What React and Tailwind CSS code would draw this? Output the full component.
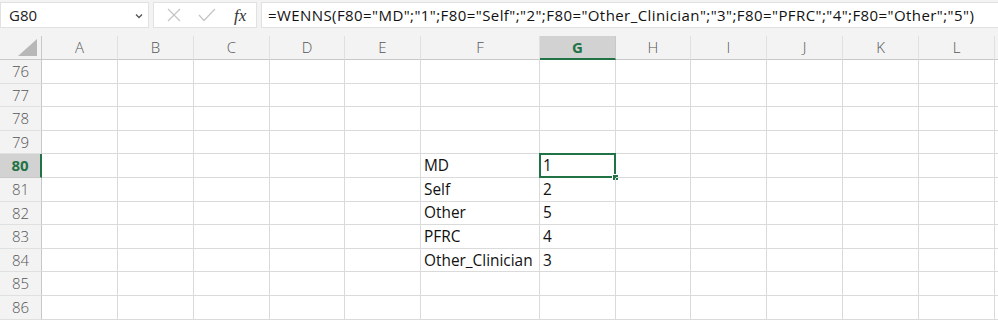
import { Fragment } from 'react';

const COLS = [
  { id: 'A', w: 76 },
  { id: 'B', w: 76 },
  { id: 'C', w: 76 },
  { id: 'D', w: 75 },
  { id: 'E', w: 76 },
  { id: 'F', w: 119 },
  { id: 'G', w: 76 },
  { id: 'H', w: 75 },
  { id: 'I', w: 76 },
  { id: 'J', w: 76 },
  { id: 'K', w: 76 },
  { id: 'L', w: 76 },
];

const DATA = {
  80: { F: 'MD', G: '1' },
  81: { F: 'Self', G: '2' },
  82: { F: 'Other', G: '5' },
  83: { F: 'PFRC', G: '4' },
  84: { F: 'Other_Clinician', G: '3' },
};

const ROWS = [76, 77, 78, 79, 80, 81, 82, 83, 84, 85, 86];

const FORMULA =
  '=WENNS(F80="MD";"1";F80="Self";"2";F80="Other_Clinician";"3";F80="PFRC";"4";F80="Other";"5")';

function FormulaBar() {
  return (
    <div className="flex h-[36px] items-start gap-[4px] bg-[#f3f3f3] pt-[2px]">
      <div className="flex h-[26px] w-[149px] items-center justify-between border border-[#e1e1e1] bg-white pl-[8px] pr-[5px] text-[15px] text-[#222]">
        <span>G80</span>
        <svg width="8" height="6" viewBox="0 0 8 6" className="mt-[2px]">
          <path d="M1 1.5 L4 4.5 L7 1.5" fill="none" stroke="#555" strokeWidth="1.3" />
        </svg>
      </div>
      <div className="flex h-[26px] w-[104px] items-center border border-[#e1e1e1] bg-white pl-[13px]">
        <svg width="14" height="14" viewBox="0 0 14 14">
          <path d="M1 1 L13 13 M13 1 L1 13" stroke="#c4c4c4" strokeWidth="1.2" />
        </svg>
        <svg width="18" height="14" viewBox="0 0 18 14" className="ml-[17px]">
          <path d="M1 7 L6 12.5 L17 1" fill="none" stroke="#c4c4c4" strokeWidth="1.2" />
        </svg>
        <span className="ml-[18px] font-['Liberation_Serif',serif] text-[17px] italic leading-none text-[#333]">
          fx
        </span>
      </div>
      <div className="flex h-[26px] flex-1 items-center border border-r-0 border-[#e1e1e1] bg-white pl-[6px] text-[15px] tracking-[0.42px] text-[#111]">
        {FORMULA}
      </div>
    </div>
  );
}

function Sheet() {
  const tpl = `42px ${COLS.map((c) => c.w + 'px').join(' ')} 1fr`;
  return (
    <div className="grid" style={{ gridTemplateColumns: tpl }}>
      <div className="relative h-[24px] border-b border-r border-[#c8c8c8] bg-[#f3f3f3]">
        <svg width="20" height="18" viewBox="0 0 20 18" className="absolute bottom-[2px] right-[3px]">
          <path d="M19 0 L19 17 L0 17 Z" fill="#b8b8b8" />
        </svg>
      </div>
      {COLS.map((c) =>
        c.id === 'G' ? (
          <div
            key={c.id}
            className="flex h-[24px] items-center justify-center border-b-2 border-r border-b-[#217346] border-r-[#c8c8c8] bg-[#d2d2d2] text-[15px] font-bold text-[#217346]"
          >
            {c.id}
          </div>
        ) : (
          <div
            key={c.id}
            className="flex h-[24px] items-center justify-center border-b border-r border-b-[#c8c8c8] border-r-[#e0e0e0] bg-[#f3f3f3] text-[15px] font-light text-[#555]"
          >
            {c.id}
          </div>
        )
      )}
      <div className="h-[24px] border-b border-[#c8c8c8] bg-[#f3f3f3]" />

      {ROWS.map((r) => (
        <Fragment key={r}>
          {r === 80 ? (
            <div className="flex h-[23.6px] items-center justify-center border-b border-r-2 border-b-[#c8c8c8] border-r-[#217346] bg-[#d2d2d2] text-[15px] font-bold text-[#217346]">
              {r}
            </div>
          ) : (
            <div className="flex h-[23.6px] items-center justify-center border-b border-r border-b-[#e0e0e0] border-r-[#c8c8c8] bg-[#f3f3f3] text-[15px] font-light text-[#555]">
              {r}
            </div>
          )}
          {COLS.map((c) => {
            const v = DATA[r] && DATA[r][c.id];
            const sel = r === 80 && c.id === 'G';
            return (
              <div
                key={c.id}
                className="relative flex h-[23.6px] items-center overflow-visible whitespace-nowrap border-b border-r border-[#dadada] pl-[3px] text-[15.4px] text-[#111]"
              >
                {v}
                {sel && (
                  <>
                    <div className="pointer-events-none absolute -left-[1px] -top-[1px] bottom-[-1px] right-[-1px] border-2 border-[#217346]" />
                    <div className="absolute bottom-[-4px] right-[-4px] h-[7px] w-[7px] border border-white bg-[#217346]" />
                  </>
                )}
              </div>
            );
          })}
          <div className="h-[23.6px] border-b border-[#dadada]" />
        </Fragment>
      ))}
    </div>
  );
}

export default function App() {
  return (
    <div className="h-[323px] w-[998px] overflow-hidden bg-white font-['Open_Sans',sans-serif]">
      <FormulaBar />
      <Sheet />
    </div>
  );
}
